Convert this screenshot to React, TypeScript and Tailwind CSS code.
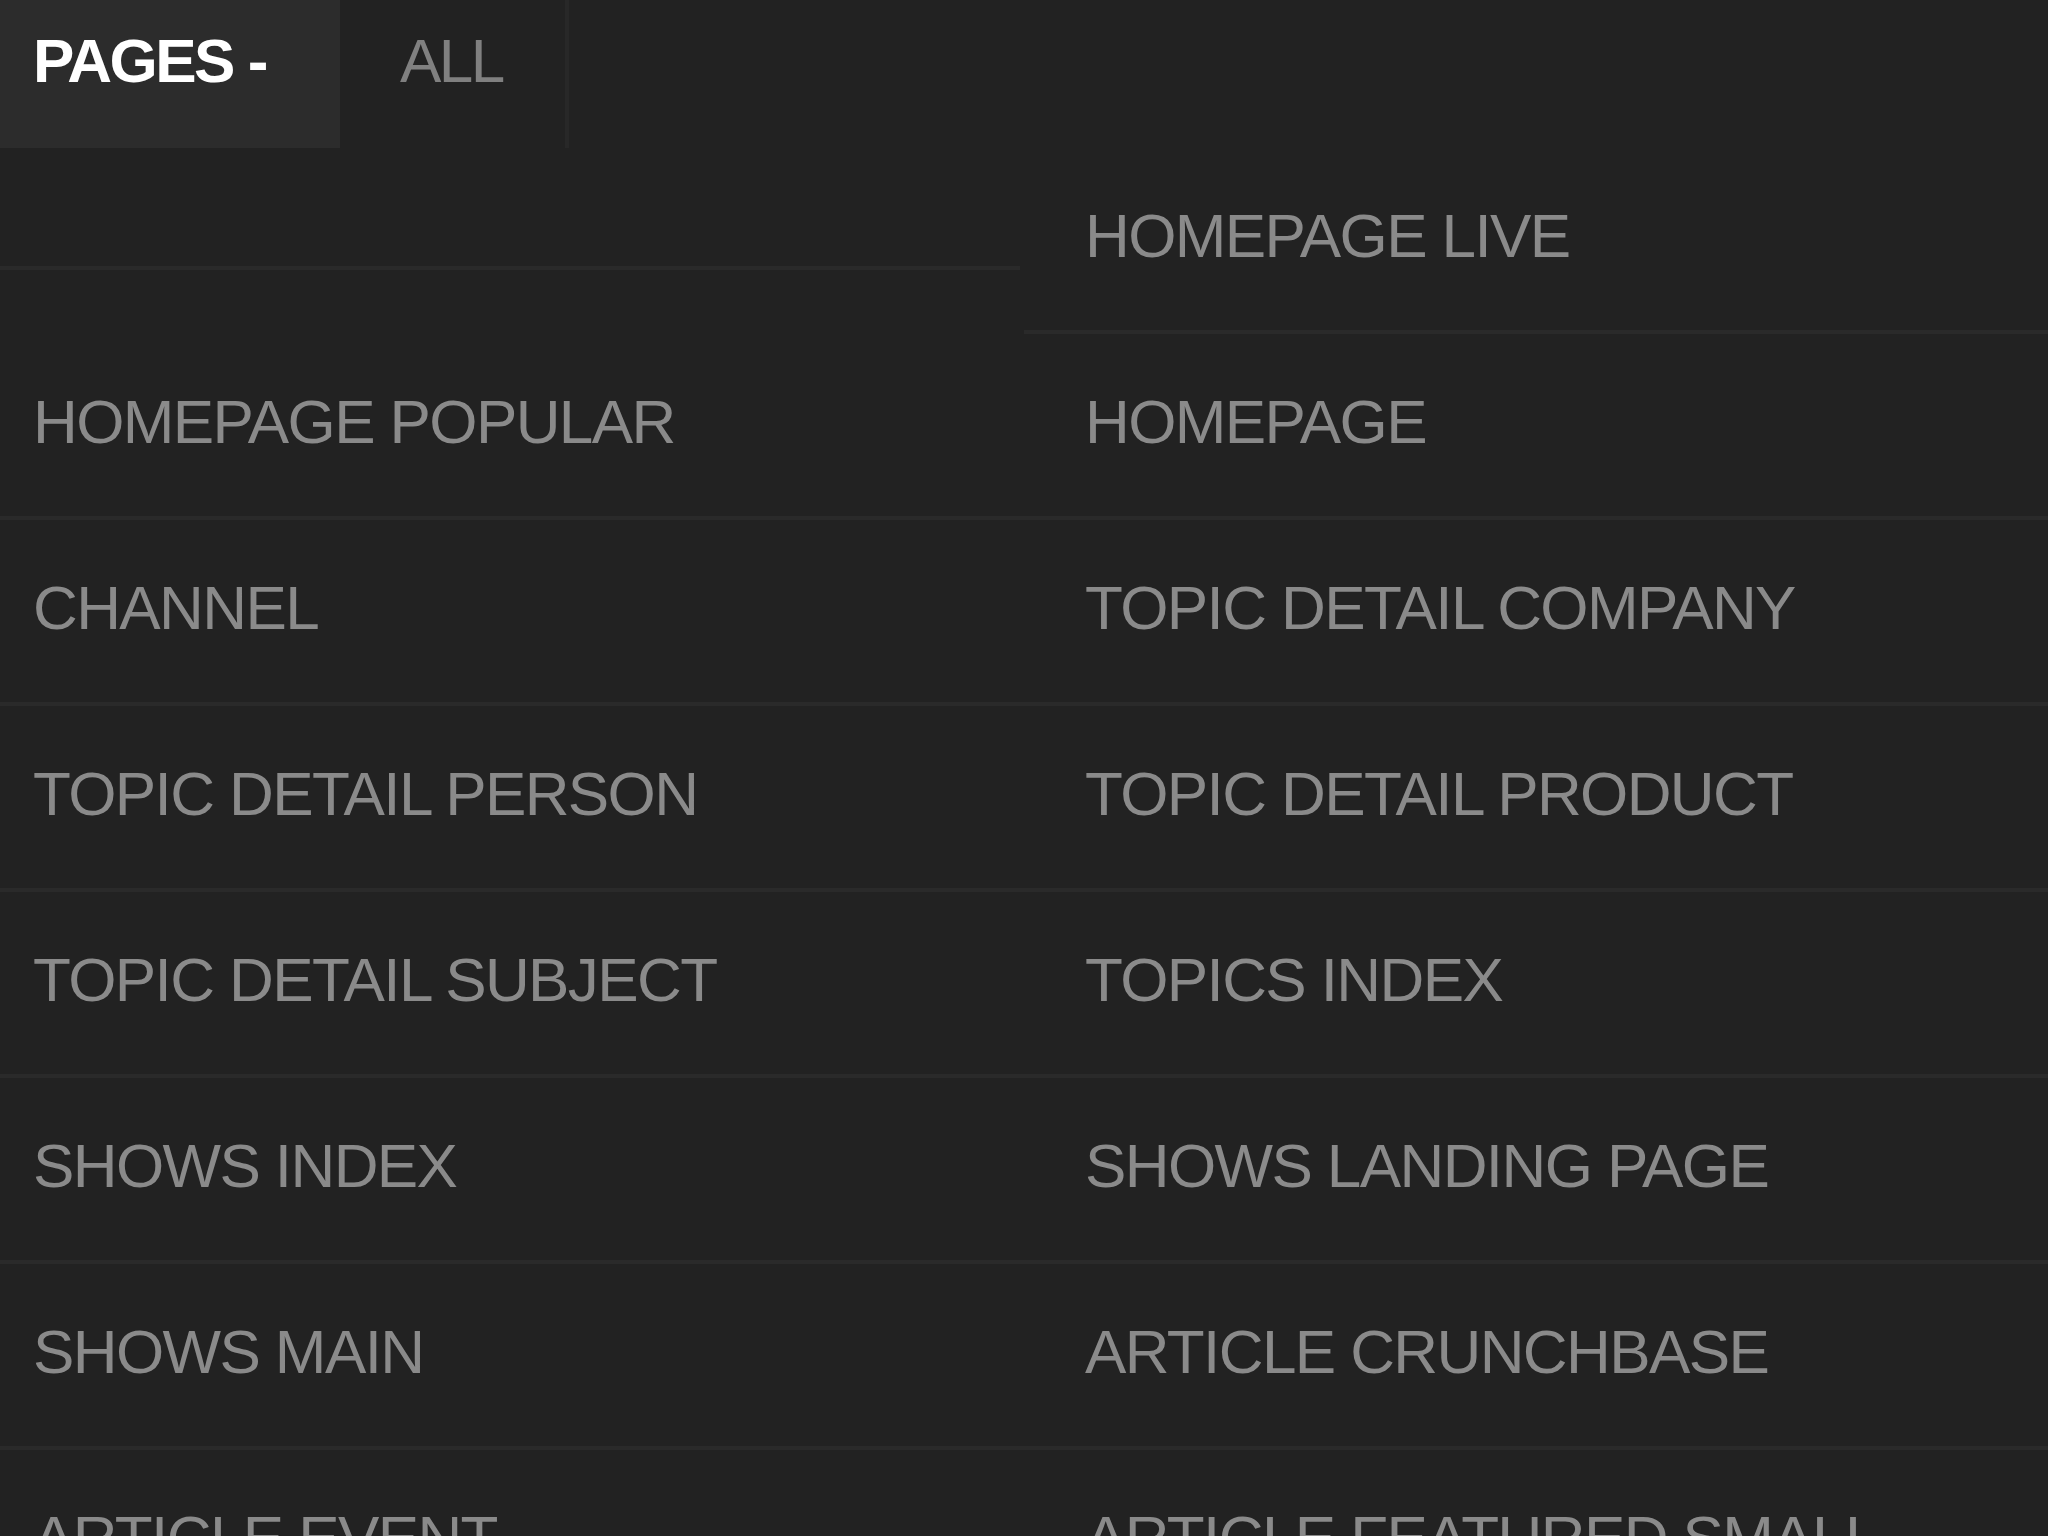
const ROWS: [string, string][] = [
  ["", "HOMEPAGE LIVE"],
  ["HOMEPAGE POPULAR", "HOMEPAGE"],
  ["CHANNEL", "TOPIC DETAIL COMPANY"],
  ["TOPIC DETAIL PERSON", "TOPIC DETAIL PRODUCT"],
  ["TOPIC DETAIL SUBJECT", "TOPICS INDEX"],
  ["SHOWS INDEX", "SHOWS LANDING PAGE"],
  ["SHOWS MAIN", "ARTICLE CRUNCHBASE"],
  ["ARTICLE EVENT", "ARTICLE FEATURED SMALL"],
];

function Cell({ label, right }: { label: string; right?: boolean }) {
  if (!label) {
    // empty first slot: only padding + divider
    return <div className="mr-[4px] h-[122px] border-b-[4px] border-[#2a2a2a]" />;
  }
  return (
    <div
      className={`border-b-[4px] border-[#2a2a2a] pt-[56px] pb-[62px] leading-[64px] text-[62px] tracking-[-1.6px] text-[#8a8a8a] whitespace-nowrap ${
        right ? "pl-[61px]" : "pl-[33px]"
      }`}
    >
      {label}
    </div>
  );
}

export default function App() {
  return (
    <div
      className="h-[1536px] w-[2048px] overflow-hidden bg-[#222222]"
      style={{ fontFamily: '"Liberation Sans", Arial, sans-serif' }}
    >
      {/* Tabs */}
      <div className="flex h-[148px]">
        <div className="flex w-[340px] items-start bg-[#2c2c2c] pl-[33px] pt-[29px]">
          <span className="text-[62px] font-bold leading-[64px] tracking-[-2.5px] text-white">
            PAGES -
          </span>
        </div>
        <div className="flex w-[229px] items-start border-r-[4px] border-[#282828] pl-[60px] pt-[29px]">
          <span className="text-[62px] leading-[64px] tracking-[-2.5px] text-[#808080]">ALL</span>
        </div>
      </div>

      {/* Page list */}
      <div className="grid grid-cols-2 items-start">
        {ROWS.map(([l, r], i) => (
          <div key={i} className="contents">
            <Cell label={l} />
            <Cell label={r} right />
          </div>
        ))}
      </div>
    </div>
  );
}
